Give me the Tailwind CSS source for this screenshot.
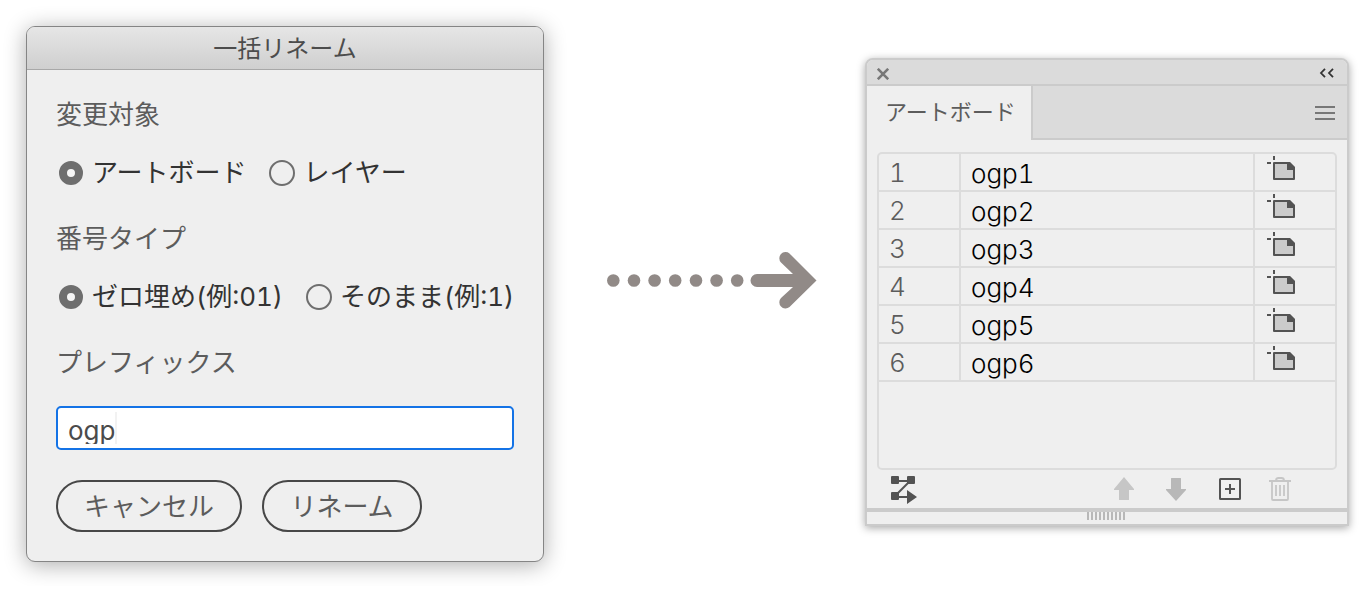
<!DOCTYPE html>
<html lang="ja">
<head>
    <meta charset="UTF-8">
    <meta name="viewport" content="width=device-width, initial-scale=1.0">
    <title>一括リネーム</title>
    <script src="https://cdn.jsdelivr.net/npm/@tailwindcss/browser@4"></script>
</head>
<body class="bg-white font-['Inter','Noto_Sans_CJK_JP',sans-serif] text-[26px] leading-8 text-[#5c5c5c]">
    <main class="grid grid-cols-[minmax(0,518fr)_minmax(0,321fr)_minmax(0,484fr)] items-start pt-[26px] pl-[26px] pr-[10px] pb-6">

        <!-- Rename dialog -->
        <form class="rounded-[9px] border border-[#858585] bg-[#efefef] shadow-[0_3px_22px_rgba(0,0,0,0.32)]">
            <h1 class="h-[43px] rounded-t-lg border-b border-[#a8a8a8] bg-linear-to-b from-[#e6e6e6] to-[#cfcfcf] pt-[6px] text-center text-2xl leading-8 text-[#4c4c4c]">一括リネーム</h1>
            <div class="px-[29px] pt-[29px] pb-[29px] whitespace-nowrap">
                <fieldset class="mb-[34px]">
                    <legend class="mb-[26px]">変更対象</legend>
                    <div class="flex gap-[23px] pl-[2px] text-[#333]">
                        <label class="flex items-center gap-2">
                            <input type="radio" name="target" checked class="size-[26px] appearance-none rounded-full border-2 border-[#6e6e6e] checked:m-px checked:size-6 checked:border-8 checked:bg-[#f5f5f5]">
                            アートボード
                        </label>
                        <label class="flex items-center gap-2">
                            <input type="radio" name="target" class="size-[26px] appearance-none rounded-full border-2 border-[#6e6e6e] checked:m-px checked:size-6 checked:border-8 checked:bg-[#f5f5f5]">
                            レイヤー
                        </label>
                    </div>
                </fieldset>
                <fieldset class="mb-[34px]">
                    <legend class="mb-[26px]">番号タイプ</legend>
                    <div class="flex gap-[23px] pl-[2px] text-[#333] tabular-nums">
                        <label class="flex items-center gap-2">
                            <input type="radio" name="number" checked class="size-[26px] appearance-none rounded-full border-2 border-[#6e6e6e] checked:m-px checked:size-6 checked:border-8 checked:bg-[#f5f5f5]">
                            ゼロ埋め(例:01)
                        </label>
                        <label class="flex items-center gap-2">
                            <input type="radio" name="number" class="size-[26px] appearance-none rounded-full border-2 border-[#6e6e6e] checked:m-px checked:size-6 checked:border-8 checked:bg-[#f5f5f5]">
                            そのまま(例:1)
                        </label>
                    </div>
                </fieldset>
                <label for="prefix" class="mb-[27px] block">プレフィックス</label>
                <div class="mb-[30px] h-11 rounded-[5px] border-2 border-[#1473e6] bg-white px-[10px] pt-1">
                    <div class="flex h-8 overflow-hidden">
                        <input id="prefix" type="text" value="ogp" class="field-sizing-content h-[37px] leading-[37px] text-[#4b4b4b] outline-none">
                        <span class="h-8 w-[2px] bg-[#f2f2f2]"></span>
                    </div>
                </div>
                <div class="flex gap-5">
                    <button type="button" class="h-[52px] w-[186px] rounded-full border-2 border-[#474747] pt-[2px]">キャンセル</button>
                    <button type="button" class="h-[52px] w-40 rounded-full border-2 border-[#474747] pt-[2px]">リネーム</button>
                </div>
            </div>
        </form>

        <!-- Arrow -->
        <div class="flex justify-center pt-[226px] pl-[14px]">
            <svg class="h-[58px] w-[210px]" viewBox="0 0 210 58" fill="#918a87">
                <circle cx="6.300" cy="28.500" r="6.300"/>
                <circle cx="27" cy="28.500" r="6.300"/>
                <circle cx="47.600" cy="28.500" r="6.300"/>
                <circle cx="68.200" cy="28.500" r="6.300"/>
                <circle cx="89" cy="28.500" r="6.300"/>
                <circle cx="109.600" cy="28.500" r="6.300"/>
                <circle cx="130.200" cy="28.500" r="6.300"/>
                <path d="M150 22h36L174 10.500a6.200 6.200 0 0 1 8.500-9L209.500 28.500l-27 26.500a6.200 6.200 0 0 1-8.500-9L186 35h-36a6.500 6.500 0 0 1 0-13z"/>
            </svg>
        </div>

        <!-- Artboard panel -->
        <section class="mt-8 rounded-t-lg border-2 border-[#cbcbcb] bg-[#efefef] shadow-[0_2px_9px_rgba(0,0,0,0.35)]">
            <header class="flex h-[26px] items-center justify-between rounded-t-md border-b-2 border-[#cbcbcb] bg-[#dbdbdb] pr-3 pl-[10px]">
                <button type="button" aria-label="閉じる">
                    <svg class="mt-1 size-3" viewBox="0 0 12 12" fill="none" stroke="#777" stroke-width="2.600"><path d="M.8.8l10.400 10.400M11.200.8L.8 11.200"/></svg>
                </button>
                <button type="button" aria-label="折りたたむ">
                    <svg class="mt-[2px] h-[10px] w-4" viewBox="0 0 16 10" fill="none" stroke="#333" stroke-width="1.800"><path d="M6 .8L2 5l4 4.200M14 .8L10 5l4 4.200"/></svg>
                </button>
            </header>
            <div class="flex h-[54px]">
                <button type="button" class="w-[166px] border-r-2 border-[#cbcbcb] pb-[2px] pl-[18px] text-left text-[22px] whitespace-nowrap">アートボード</button>
                <div class="flex flex-1 items-center justify-end border-b-2 border-[#cbcbcb] bg-[#dbdbdb] pt-[2px] pr-3">
                    <button type="button" aria-label="メニュー">
                        <svg class="h-[14px] w-5" viewBox="0 0 20 14" fill="#777"><path d="M0 0h20v2H0zM0 6h20v2H0zM0 12h20v2H0z"/></svg>
                    </button>
                </div>
            </div>

            <svg class="hidden">
                <symbol id="artboard" viewBox="0 0 28 24">
                    <path d="M0 6h4v2H0zM6 0h2v4H6z" fill="#535353"/>
                    <path d="M7 7h15l5 5v11H7z" fill="#cbcbcb" stroke="#535353" stroke-width="2" stroke-linejoin="round"/>
                    <path d="M20 6h3l5 5v3h-8z" fill="#535353"/>
                </symbol>
            </svg>
            <div class="mx-[10px] mt-3 h-[318px] rounded-[5px] border-2 border-[#dcdcdc]">
                <table class="w-full table-fixed border-separate border-spacing-0 font-light tabular-nums">
                    <colgroup><col class="w-[82px]"><col><col class="w-20"></colgroup>
                    <tbody>
                        <tr>
                            <td class="h-[38px] border-r-2 border-b-2 border-[#dcdcdc] pt-px pl-[10px]">1</td>
                            <td class="border-r-2 border-b-2 border-[#dcdcdc] pt-[3px] pl-[10px] text-black">ogp1</td>
                            <td class="border-b-2 border-[#dcdcdc] pt-[2px] pl-3 align-top"><svg class="h-6 w-7"><use href="#artboard"/></svg></td>
                        </tr>
                        <tr>
                            <td class="h-[38px] border-r-2 border-b-2 border-[#dcdcdc] pt-px pl-[10px]">2</td>
                            <td class="border-r-2 border-b-2 border-[#dcdcdc] pt-[3px] pl-[10px] text-black">ogp2</td>
                            <td class="border-b-2 border-[#dcdcdc] pt-[2px] pl-3 align-top"><svg class="h-6 w-7"><use href="#artboard"/></svg></td>
                        </tr>
                        <tr>
                            <td class="h-[38px] border-r-2 border-b-2 border-[#dcdcdc] pt-px pl-[10px]">3</td>
                            <td class="border-r-2 border-b-2 border-[#dcdcdc] pt-[3px] pl-[10px] text-black">ogp3</td>
                            <td class="border-b-2 border-[#dcdcdc] pt-[2px] pl-3 align-top"><svg class="h-6 w-7"><use href="#artboard"/></svg></td>
                        </tr>
                        <tr>
                            <td class="h-[38px] border-r-2 border-b-2 border-[#dcdcdc] pt-px pl-[10px]">4</td>
                            <td class="border-r-2 border-b-2 border-[#dcdcdc] pt-[3px] pl-[10px] text-black">ogp4</td>
                            <td class="border-b-2 border-[#dcdcdc] pt-[2px] pl-3 align-top"><svg class="h-6 w-7"><use href="#artboard"/></svg></td>
                        </tr>
                        <tr>
                            <td class="h-[38px] border-r-2 border-b-2 border-[#dcdcdc] pt-px pl-[10px]">5</td>
                            <td class="border-r-2 border-b-2 border-[#dcdcdc] pt-[3px] pl-[10px] text-black">ogp5</td>
                            <td class="border-b-2 border-[#dcdcdc] pt-[2px] pl-3 align-top"><svg class="h-6 w-7"><use href="#artboard"/></svg></td>
                        </tr>
                        <tr>
                            <td class="h-[38px] border-r-2 border-b-2 border-[#dcdcdc] pt-px pl-[10px]">6</td>
                            <td class="border-r-2 border-b-2 border-[#dcdcdc] pt-[3px] pl-[10px] text-black">ogp6</td>
                            <td class="border-b-2 border-[#dcdcdc] pt-[2px] pl-3 align-top"><svg class="h-6 w-7"><use href="#artboard"/></svg></td>
                        </tr>
                    </tbody>
                </table>
            </div>

            <footer class="flex h-[38px] items-center justify-between pr-[55px] pl-6">
                <button type="button" aria-label="すべて再配置">
                    <svg class="mt-[2px] h-7 w-[26px]" viewBox="0 0 26 28" fill="#535353">
                        <rect width="8" height="8" rx="1"/><rect x="16" width="8" height="8" rx="1"/><rect y="16" width="8" height="8" rx="1"/>
                        <path d="M6 4h12v2H6zM6 20h12v2H6zM16 14l10 7-10 7z"/>
                        <path d="M6 18L18 6" stroke="#535353" stroke-width="2"/>
                    </svg>
                </button>
                <div class="flex gap-7">
                    <button type="button" aria-label="上に移動">
                        <svg class="size-6" viewBox="0 0 24 24" fill="#c6c6c6"><path d="M12 0l10 12v1h-5v9.500q0 .5-.5.500h-9q-.5 0-.5-.500V13H2v-1z"/></svg>
                    </button>
                    <button type="button" aria-label="下に移動">
                        <svg class="size-6" viewBox="0 0 24 24" fill="#b8b8b8"><path d="M12 24L2 13v-1h5V1.500q0-.5.5-.500h9q.5 0 .5.500V12h5v1z"/></svg>
                    </button>
                    <button type="button" aria-label="新規アートボード">
                        <svg class="size-6 overflow-visible" viewBox="0 0 24 24" fill="none" stroke="#535353" stroke-width="2"><rect x="4" y="2" width="20" height="20" rx=".5"/><path d="M9 12h10M14 7v10"/></svg>
                    </button>
                    <button type="button" aria-label="削除">
                        <svg class="size-6" viewBox="0 0 24 24" fill="none" stroke="#c6c6c6" stroke-width="2"><path d="M1 4h22M8 3.500C8 1.500 9 1 10.500 1h3C15 1 16 1.500 16 3.500M4 5v17q0 1 1 1h14q1 0 1-1V5M8 8v11M12 8v11M16 8v11" stroke-width="1.800"/></svg>
                    </button>
                </div>
            </footer>
            <div class="flex h-4 justify-center border-t-4 border-[#cbcbcb] pr-[2px]">
                <svg class="h-2 w-[38px]" viewBox="0 0 38 8"><path d="M0 4h38" stroke="#b8b8b8" stroke-width="8" stroke-dasharray="2 2"/></svg>
            </div>
        </section>
    </main>
</body>
</html>
